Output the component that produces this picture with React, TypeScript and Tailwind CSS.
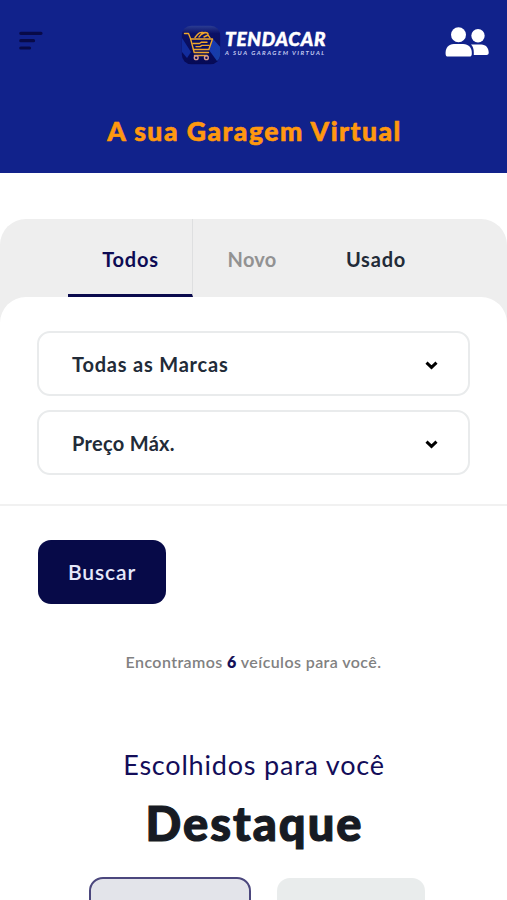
const filters = [
  { label: "Todas as Marcas", tracking: "tracking-[0.8px]" },
  { label: "Preço Máx.", tracking: "tracking-[0.3px]" },
]

function MenuIcon() {
  return (
    <svg width="26" height="20" viewBox="0 0 26 20" fill="none" stroke="#080a48" strokeWidth="3.2" strokeLinecap="round">
      <path d="M2.8 2.3H23M2.8 9.7H15.5M2.8 17H11.5" />
    </svg>
  )
}

function UsersIcon() {
  return (
    <svg width="44" height="31" viewBox="0 0 44 31" fill="#fff">
      <circle cx="13.5" cy="7.7" r="7.5" />
      <path d="M8.8 17H18.2C23.5 17 26.8 20.7 26.8 25.5V27C26.8 28.6 25.9 29.6 24.4 29.6H2.9C1.5 29.6 .6 28.6 .6 27V25.5C.6 20.7 3.8 17 8.8 17Z" />
      <circle cx="33" cy="8.8" r="6.7" />
      <path d="M26 17.4H36.4C40.8 17.4 43.7 21 43.7 25.2V26C43.7 27.2 42.8 28 41.6 28H28.8V25.2C28.8 22 28 19.4 26 17.4Z" />
    </svg>
  )
}

function LogoMark() {
  return (
    <svg width="40" height="40" viewBox="0 0 40 40" fill="none" className="shrink-0">
      <defs>
        <linearGradient id="mark" x1="0" y1="0" x2="0" y2="1">
          <stop offset="0" stopColor="#2b3c92" />
          <stop offset=".2" stopColor="#0b1166" />
          <stop offset="1" stopColor="#060a56" />
        </linearGradient>
        <linearGradient id="shine" x1="0" y1="0" x2="1" y2="1">
          <stop offset="0" stopColor="#1736b4" />
          <stop offset="1" stopColor="#1640a4" />
        </linearGradient>
      </defs>
      <rect x=".8" y=".8" width="38.4" height="38.4" rx="9.5" fill="url(#mark)" />
      <path d="M32 14L39.2 22V29Q39 34 36 36L28 25Z" fill="url(#shine)" />
      <path d="M1 13L10 27L6 33L1 27Z" fill="#122c9c" />
      <g stroke="#efa62b" strokeWidth="1.4" strokeLinecap="round" strokeLinejoin="round">
        <path d="M3.5 8.5H7.5L9.5 13.5L13.2 27.5H27.5" />
        <path d="M10 14H31.5L27.8 24.5H12.5" />
        <path d="M13.5 30.5H26M12 18.5H18.5L20.5 17.2H26M15 21.6H19L21 20.4H28" />
        <path d="M14 12.5L16.5 9.5Q18.5 7 22 7.5L18 12M20 9.5L24 7.5Q27.5 7.5 27 10L23 12M27 10L29 12.8" />
      </g>
      <circle cx="15.2" cy="32.7" r="1.9" stroke="#d99b8d" strokeWidth="1.4" />
      <circle cx="25.4" cy="32.7" r="1.9" stroke="#d99b8d" strokeWidth="1.4" />
    </svg>
  )
}

function Header() {
  return (
    <header className="h-[173px] bg-[#11228b]">
      <div className="flex h-[84px] items-center pt-px pr-[18px] pl-[18px]">
        <div className="w-[163px] shrink-0 pb-1">
          <MenuIcon />
        </div>
        <div className="flex items-center pt-1">
          <LogoMark />
          <div className="ml-1 pb-[5px] whitespace-nowrap text-white italic">
            <div className="text-[19px] leading-[21px] font-black tracking-[0.75px] [-webkit-text-stroke:0.5px_#fff]">
              TENDACAR
            </div>
            <div className="text-[6px] leading-[7px] font-bold tracking-[1.49px] text-[#c6cdf2]">
              A SUA GARAGEM VIRTUAL
            </div>
          </div>
        </div>
        <div className="ml-auto">
          <UsersIcon />
        </div>
      </div>
      <h1 className="pt-[29px] pl-[2px] text-center text-[26.5px] leading-9 font-black tracking-[1.5px] text-[#ff980f] [-webkit-text-stroke:0.6px_#ff980f]">
        A sua Garagem Virtual
      </h1>
    </header>
  )
}

function FilterSelect({ label, tracking }: { label: string; tracking: string }) {
  return (
    <button className="flex h-[65px] w-full items-center justify-between rounded-[13px] border-2 border-[#e9ebec] bg-white pr-[30px] pl-[33px] text-[20px] font-bold text-[#222b38]">
      <span className={tracking}>{label}</span>
      <svg width="13" height="9" viewBox="0 0 13 9" className="mt-1" fill="none" stroke="#000" strokeWidth="3">
        <path d="M1.5 1.6L6.5 6.4L11.5 1.6" />
      </svg>
    </button>
  )
}

function Search() {
  return (
    <section className="mt-[46px]">
      <div className="rounded-t-[26px] bg-[#eee]">
        <div className="flex h-[78px] pl-[68px] text-[20px] font-bold tracking-[0.8px]">
          <button className="w-[125px] border-r border-b-[3px] border-r-[#dedfe0] border-b-[#0a0a4d] pt-1 pl-px text-[#0d0b54]">
            Todos
          </button>
          <button className="w-[118px] pt-px tracking-[0.2px] text-[#929292]">Novo</button>
          <button className="w-[130px] pt-px text-[#222b38]">Usado</button>
        </div>
        <div className="flex flex-col gap-[14px] rounded-t-[26px] bg-white px-[37px] pt-[34px] pb-[29px]">
          {filters.map((filter) => (
            <FilterSelect key={filter.label} label={filter.label} tracking={filter.tracking} />
          ))}
        </div>
      </div>
      <div className="border-t-2 border-[#f1f1f1] px-[38px] pt-[34px]">
        <button className="block h-16 w-32 rounded-[13px] bg-[#070a48] text-[21px] font-semibold tracking-[0.9px] text-[#e6e8fa]">
          Buscar
        </button>
      </div>
      <p className="mt-[46px] text-center text-[16px] leading-6 font-semibold tracking-[0.41px] text-[#818181]">
        Encontramos <span className="font-extrabold text-[#171258]">6</span> veículos para você.
      </p>
    </section>
  )
}

function Highlights() {
  return (
    <section className="pt-[73px] text-center">
      <p className="pl-px text-[27px] leading-9 tracking-[0.8px] text-[#130d59]">Escolhidos para você</p>
      <h2 className="mt-[10px] pl-[2px] text-[47px] leading-[60px] font-black tracking-[2px] text-[#171b23] [-webkit-text-stroke:1.2px_#171b23]">
        Destaque
      </h2>
      <div className="mt-6 flex h-[23px] items-start gap-[26px] overflow-hidden pl-[89px]">
        <div className="h-24 w-[162px] shrink-0 rounded-[14px] border-2 border-[#4b477d] bg-[#e3e4ea]" />
        <div className="mt-px h-24 w-[148px] shrink-0 rounded-[13px] bg-[#e9ecec]" />
      </div>
    </section>
  )
}

export default function App() {
  return (
    <main className="h-[900px] w-full overflow-hidden bg-white font-[Lato,sans-serif]">
      <Header />
      <Search />
      <Highlights />
    </main>
  )
}
